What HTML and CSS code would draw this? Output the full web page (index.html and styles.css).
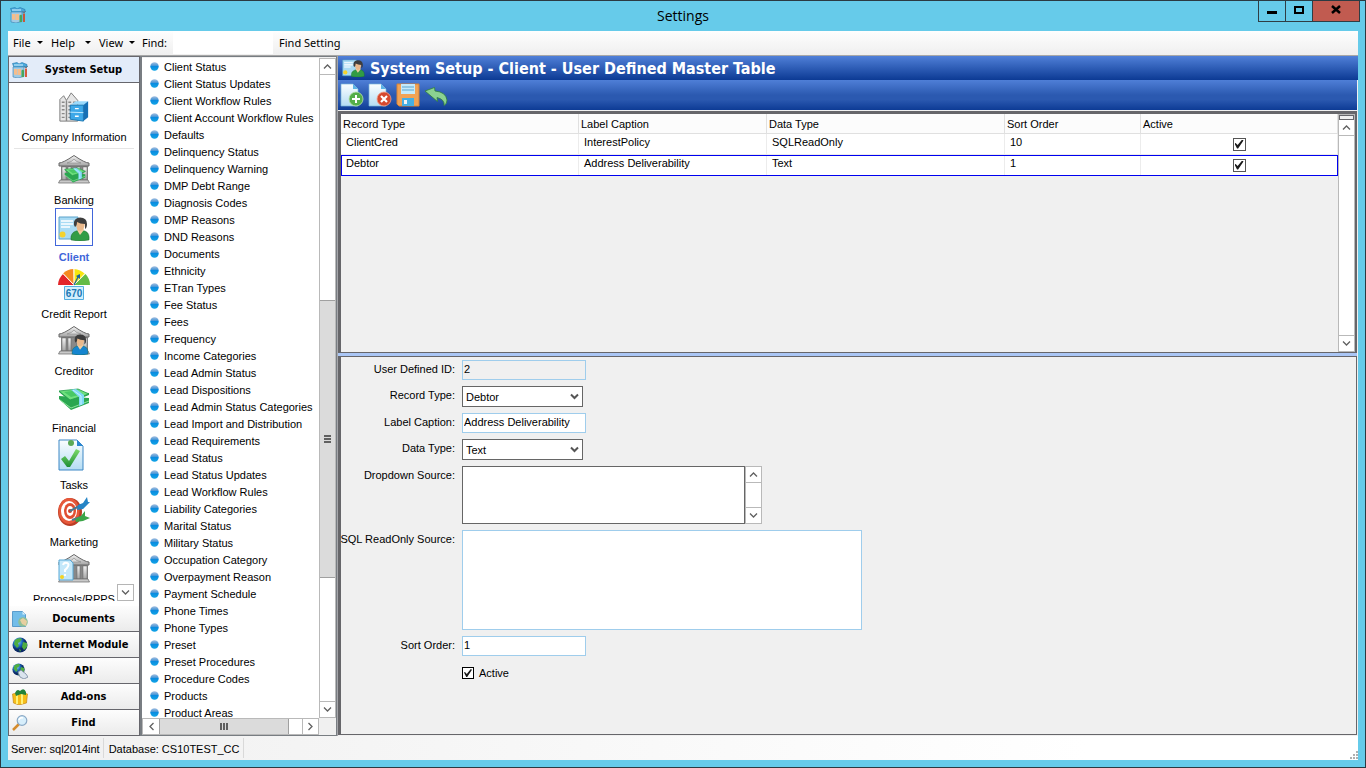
FILE: index.html
```html
<!DOCTYPE html>
<html lang="en">
<head>
    <meta charset="utf-8">
    <title>Settings</title>
    <link rel="stylesheet" href="styles.css">
</head>
<body>
    <!-- shared icons -->
    <svg class="sprites" aria-hidden="true">
        <defs>
            <linearGradient id="g-stone" x1="0" y1="0" x2="0" y2="1"><stop offset="0" stop-color="#f2f2f2"/><stop offset="1" stop-color="#a4a4a4"/></linearGradient>
            <linearGradient id="g-green" x1="0" y1="0" x2="0" y2="1"><stop offset="0" stop-color="#7ddc6a"/><stop offset="1" stop-color="#1f8e35"/></linearGradient>
            <linearGradient id="g-paper" x1="0" y1="0" x2="0" y2="1"><stop offset="0" stop-color="#fbfeff"/><stop offset="1" stop-color="#b4dcf3"/></linearGradient>
            <linearGradient id="g-bullet" x1="0" y1="0" x2="0" y2="1"><stop offset="0" stop-color="#a5bfe0"/><stop offset="0.4" stop-color="#4797d8"/><stop offset="0.5" stop-color="#0a8ce0"/><stop offset="1" stop-color="#12a5e6"/></linearGradient>
            <radialGradient id="g-globe" cx="0.35" cy="0.3"><stop offset="0" stop-color="#8fd4ff"/><stop offset="0.6" stop-color="#1d68bd"/><stop offset="1" stop-color="#0b2a66"/></radialGradient>
        </defs>
        <symbol id="i-bullet" viewBox="0 0 9 9"><circle cx="4.5" cy="4.5" r="4.2" fill="url(#g-bullet)"/></symbol>
        <symbol id="i-up" viewBox="0 0 9 9"><path d="M1 6.5 4.5 3 8 6.5" fill="none" stroke="#606060" stroke-width="1.3"/></symbol>
        <symbol id="i-down" viewBox="0 0 9 9"><path d="M1 2.5 4.5 6 8 2.5" fill="none" stroke="#606060" stroke-width="1.3"/></symbol>
        <symbol id="i-left" viewBox="0 0 9 9"><path d="M6.5 1 3 4.5 6.5 8" fill="none" stroke="#606060" stroke-width="1.3"/></symbol>
        <symbol id="i-right" viewBox="0 0 9 9"><path d="M2.5 1 6 4.5 2.5 8" fill="none" stroke="#606060" stroke-width="1.3"/></symbol>
        <symbol id="i-setup" viewBox="0 0 16 16">
            <path d="M.5 1.5 5 .5 7 2l3-1.5 5 2V5L2 5.5z" fill="#4aa9dc" stroke="#2376ad" stroke-width=".6"/>
            <path d="M1 5h11v9.5L6 16l-5-1z" fill="#9fcbe6" stroke="#3a80ae" stroke-width=".6"/>
            <path d="M2 7h3.5v6L2 12.5zM6 7h3v6H6z" fill="#f6bd8c"/>
            <path d="M2 3h9" stroke="#d9f2ff"/>
            <path d="M9.5 15V8.500l1.500-1 1 1V15z" fill="#47a75b"/>
            <path d="M14 6.500V15" stroke="#d54c28" stroke-width="1.800"/>
            <path d="m12.500 4 1.500 2 1.700-2" fill="none" stroke="#647786"/>
        </symbol>
        <symbol id="i-company" viewBox="0 0 32 34">
            <path d="M1 9 5 5l3 5 5-8 7 8v22H1z" fill="#e6e6e6" stroke="#777"/>
            <path d="M8 10v22M3 12h3m-3 4h3m-3 4h3m-3 4h3m-3 4h3m4-16h3m2 0h3m-8 4h3m-3 4h3m-3 4h3m-3 4h3" stroke="#888" stroke-width="1.500"/>
            <path d="m13 14 5-3h13l-4 4z" fill="#9adafc"/>
            <path d="M12 15h14v17l-14-2z" fill="#3da8e8" stroke="#1976b2"/>
            <path d="m26 15 5-4v17l-5 4z" fill="#1770b5"/>
            <path d="M12 22.500 26 23" stroke="#c6ecff"/>
            <path d="M17 18h4v1.500h-4zM17 26h4v1.500h-4z" fill="#fff"/>
        </symbol>
        <symbol id="i-bank" viewBox="0 0 32 32">
            <path d="M3 11h27v17H3z" fill="#888"/>
            <path d="M1 9q4 0 15-7.500Q27 9 31 9v3H1z" fill="url(#g-stone)" stroke="#686868"/>
            <path d="M9 9q5-1 7-4 2 3 7 4z" fill="#ddd" stroke="#888" stroke-width=".6"/>
            <path d="M4 13h4v13H4zM10 13h3v13h-3zM19 13h3v13h-3zM25 13h4v13h-4z" fill="url(#g-stone)" stroke="#666" stroke-width=".5"/>
            <path d="M2 26h28l1.500 3H.5z" fill="#c9c9c9" stroke="#666" stroke-width=".7"/>
        </symbol>
        <symbol id="i-cash" viewBox="0 0 32 24">
            <path d="m1 11 12 11 18-7v-5L1 8z" fill="#2aa650"/>
            <path d="m2 12 11 8 18-7" fill="none" stroke="#8be39a"/>
            <path d="m1 4 12 10 18-7V5L1 3z" fill="#2aa650"/>
            <path d="m1 3 19-2 11 5-19 6z" fill="#6fe07e" stroke="#22994a" stroke-width=".8"/>
            <path d="m6 4 12-1.500L25 6l-12 3z" fill="#48c865"/>
            <path d="m13 1.700 5-.6 8 6v9l-5 2V9z" fill="#7fd8f6"/>
            <path d="m15 2 8 6v9" fill="none" stroke="#c9f1ff"/>
        </symbol>
        <symbol id="i-person" viewBox="0 0 20 24">
            <path d="M1 23q-1-7 5-9l4-1 5 1q5 2 4 9-9 2-18 0z" fill="currentColor" stroke="#176029" stroke-width=".4"/>
            <path d="m7 13 3 5 4-5-1-3H8z" fill="#f3cda0"/>
            <path d="M6 5q0 9 4 9t5-8L12 3z" fill="#eab98c"/>
            <path d="M4 8Q3 1 10 .5q7 0 7 6.500 0 4-2 5V7Q10 7 7 5q0 4-2 5z" fill="#3d3d3d"/>
        </symbol>
        <symbol id="i-client" viewBox="0 0 32 26">
            <path d="M1 1h19v22H1z" fill="#a9dbf4" stroke="#5aa2ca"/>
            <path d="M3 5h12M3 8h12m-12 3h9" stroke="#fff" stroke-width="1.500"/>
            <circle cx="4.500" cy="18.500" r="3" fill="#f5d22e"/>
            <use href="#i-person" x="12" y="1" width="20" height="24" color="#319c45"/>
        </symbol>
        <symbol id="i-page" viewBox="0 0 24 24"><path d="M1 1h12l5 5v17H1z" fill="url(#g-paper)" stroke="#79b6d9" stroke-width=".7"/><path d="M13 1v5h5z" fill="#5eb4e6"/></symbol>
        <symbol id="i-globe" viewBox="0 0 16 16"><circle cx="8" cy="8" r="7.500" fill="url(#g-globe)"/><path d="M3 3q4-3 7-1L8 5 6 6l1 3-2 2-3-4zm8 2 4 1v4l-3 3-2-3zM7 12l2 1-1 2z" fill="#4fae3f"/></symbol>
    </svg>

    <div class="window">
        <header class="titlebar">
            <svg class="title-icon"><use href="#i-setup"/></svg>
            <h1>Settings</h1>
            <div class="window-buttons">
                <button type="button" aria-label="Minimize"><svg width="10" height="10"><path d="M0 6h10v3H0z"/></svg></button>
                <button type="button" aria-label="Maximize"><svg width="10" height="10"><path d="M1 2h8v6H1z" fill="none" stroke="#000" stroke-width="2"/></svg></button>
                <button type="button" class="close" aria-label="Close"><svg width="10" height="10"><path d="m1 1 8 7M9 1 1 8" stroke="#000" stroke-width="2.500"/></svg></button>
            </div>
        </header>

        <nav class="menubar">
            <button type="button" class="menu">File</button>
            <button type="button" class="menu menu-help">Help</button>
            <button type="button" class="menu menu-view">View</button>
            <label for="find">Find:</label>
            <input id="find" type="text">
            <button type="button" class="find-setting">Find Setting</button>
        </nav>

        <main class="content">
            <aside class="sidebar">
                <button type="button" class="section current"><svg><use href="#i-setup"/></svg><span>System Setup</span></button>
                <div class="modules">
                    <button type="button" class="module"><span class="module-icon"><svg viewBox="0 0 32 34"><use href="#i-company"/></svg></span>Company Information</button>
                    <hr>
                    <button type="button" class="module"><span class="module-icon"><svg viewBox="0 0 32 32"><use href="#i-bank"/><use href="#i-cash" x="6" y="13" width="22" height="17"/></svg></span>Banking</button>
                    <button type="button" class="module selected"><span class="module-icon"><svg viewBox="0 0 32 32"><use href="#i-client" y="5" width="32" height="26"/></svg></span>Client</button>
                    <button type="button" class="module"><span class="module-icon"><svg viewBox="0 0 32 32">
                        <path d="M16 17H0A16 16 0 0 1 5 6z" fill="#e3262a"/>
                        <path d="M16 17 5 5.500A16 16 0 0 1 15.500 1z" fill="#f58a20"/>
                        <path d="M16 17V1a16 16 0 0 1 11 5z" fill="#f7e60e"/>
                        <path d="M16 17 27.500 6A16 16 0 0 1 32 17z" fill="#63bb46"/>
                        <path d="m5 5.500 11 11.500L27 5.500M16 17V1" stroke="#fff" fill="none"/>
                        <path d="m16 17 5-10" stroke="#17649c" stroke-width="1.300"/><path d="m18 8 4-2v5z" fill="#17649c"/>
                        <path d="M6.500 18.500h19v13h-19z" fill="#d3effc" stroke="#53aee0"/>
                        <text x="16" y="29" class="score">670</text>
                    </svg></span>Credit Report</button>
                    <button type="button" class="module"><span class="module-icon"><svg viewBox="0 0 32 32"><use href="#i-bank"/><use href="#i-person" x="13" y="9" width="18" height="21" color="#1685cf"/></svg></span>Creditor</button>
                    <button type="button" class="module"><span class="module-icon"><svg viewBox="0 0 32 32"><use href="#i-cash" y="6" width="32" height="24"/></svg></span>Financial</button>
                    <button type="button" class="module"><span class="module-icon"><svg viewBox="0 0 32 32">
                        <path d="M1 1h18l6 6v24H1z" fill="url(#g-paper)" stroke="#3c87c5"/><path d="M19 1v6h6z" fill="#2c88d2"/>
                        <circle cx="13" cy="4" r="3" fill="#5ba956"/>
                        <path d="m3 20 4-3 4 5 7-12 4 2-10 16H9z" fill="url(#g-green)"/>
                    </svg></span>Tasks</button>
                    <button type="button" class="module"><span class="module-icon"><svg viewBox="0 0 32 32">
                        <ellipse cx="12" cy="16" rx="12" ry="14" fill="#bb3d25"/><ellipse cx="11" cy="15" rx="10.500" ry="13" fill="#e6583a"/>
                        <ellipse cx="11" cy="15" rx="8" ry="10" fill="#fff"/><ellipse cx="12" cy="15" rx="6" ry="8" fill="#e04e32"/>
                        <ellipse cx="12" cy="15" rx="3.500" ry="5" fill="#fff"/><circle cx="12" cy="15" r="2" fill="#d43c24"/>
                        <path d="m12 15 11-6M14 24l12-4" stroke="#4b7890" stroke-width="2"/>
                        <path d="m20 9 5-2 4-6 1 5h2l-7 7-6 1z" fill="#2584c5"/>
                        <path d="m17 23 6-3 4-5v5l5 2-7 3-7 1z" fill="#3ca548"/>
                    </svg></span>Marketing</button>
                    <button type="button" class="module"><span class="module-icon"><svg viewBox="0 0 32 32"><use href="#i-bank"/>
                        <path d="M1 7h11l3 3v17H1z" fill="#c4e8fa" stroke="#58a8d5"/><path d="M5 12q1-3 4-2t0 5l-2 2v2m0 2v2" fill="none" stroke="#fff" stroke-width="2"/>
                        <circle cx="4" cy="24" r="2" fill="#f4d321"/>
                    </svg></span>Proposals/RPPS</button>
                    <button type="button" class="more" aria-label="Scroll down"><svg><use href="#i-down"/></svg></button>
                </div>
                <button type="button" class="section"><svg viewBox="0 0 16 16"><path d="M.5.500h10l3 3v12H.5z" fill="#72bde9" stroke="#3283bd" stroke-width=".7"/><path d="M10.500.500v3h3z" fill="#d6effc"/><circle cx="11" cy="11" r="4.800" fill="#8dbf99"/><path d="m8 9 3-2 4 3-1 5-4-2z" fill="#e7cfa0"/></svg><span>Documents</span></button>
                <button type="button" class="section"><svg><use href="#i-globe"/></svg><span>Internet Module</span></button>
                <button type="button" class="section"><svg viewBox="0 0 16 16"><use href="#i-globe" width="13" height="13"/><path d="m6 9 3-2 5 4 2 3-4 2-4-2z" fill="#dbe4ee" stroke="#74869e" stroke-width=".8"/></svg><span>API</span></button>
                <button type="button" class="section"><svg viewBox="0 0 16 16"><path d="M.5 5 9 3l6.500 2-1 9L7 16l-5.500-2z" fill="#f5bd19" stroke="#bd7c0b" stroke-width=".6"/><path d="M5 5v10m5-10v10" stroke="#fff178" stroke-width="2"/><path d="M3 4q2-5 5-2 4-4 6 1v3L9 5 4 7z" fill="#23833a"/></svg><span>Add-ons</span></button>
                <button type="button" class="section"><svg viewBox="0 0 16 16"><path d="m1 15 6-6" stroke="#d58c2d" stroke-width="2.500"/><circle cx="10" cy="5.500" r="4.800" fill="#d7eefb" stroke="#8aa9c6" stroke-width="1.200"/><path d="M7 5q1-3 4-2" fill="none" stroke="#fff" stroke-width="1.500"/></svg><span>Find</span></button>
            </aside>

            <section class="tables">
                <ul class="table-list">
                    <li><a href="#"><svg><use href="#i-bullet"/></svg>Client Status</a></li>
                    <li><a href="#"><svg><use href="#i-bullet"/></svg>Client Status Updates</a></li>
                    <li><a href="#"><svg><use href="#i-bullet"/></svg>Client Workflow Rules</a></li>
                    <li><a href="#"><svg><use href="#i-bullet"/></svg>Client Account Workflow Rules</a></li>
                    <li><a href="#"><svg><use href="#i-bullet"/></svg>Defaults</a></li>
                    <li><a href="#"><svg><use href="#i-bullet"/></svg>Delinquency Status</a></li>
                    <li><a href="#"><svg><use href="#i-bullet"/></svg>Delinquency Warning</a></li>
                    <li><a href="#"><svg><use href="#i-bullet"/></svg>DMP Debt Range</a></li>
                    <li><a href="#"><svg><use href="#i-bullet"/></svg>Diagnosis Codes</a></li>
                    <li><a href="#"><svg><use href="#i-bullet"/></svg>DMP Reasons</a></li>
                    <li><a href="#"><svg><use href="#i-bullet"/></svg>DND Reasons</a></li>
                    <li><a href="#"><svg><use href="#i-bullet"/></svg>Documents</a></li>
                    <li><a href="#"><svg><use href="#i-bullet"/></svg>Ethnicity</a></li>
                    <li><a href="#"><svg><use href="#i-bullet"/></svg>ETran Types</a></li>
                    <li><a href="#"><svg><use href="#i-bullet"/></svg>Fee Status</a></li>
                    <li><a href="#"><svg><use href="#i-bullet"/></svg>Fees</a></li>
                    <li><a href="#"><svg><use href="#i-bullet"/></svg>Frequency</a></li>
                    <li><a href="#"><svg><use href="#i-bullet"/></svg>Income Categories</a></li>
                    <li><a href="#"><svg><use href="#i-bullet"/></svg>Lead Admin Status</a></li>
                    <li><a href="#"><svg><use href="#i-bullet"/></svg>Lead Dispositions</a></li>
                    <li><a href="#"><svg><use href="#i-bullet"/></svg>Lead Admin Status Categories</a></li>
                    <li><a href="#"><svg><use href="#i-bullet"/></svg>Lead Import and Distribution</a></li>
                    <li><a href="#"><svg><use href="#i-bullet"/></svg>Lead Requirements</a></li>
                    <li><a href="#"><svg><use href="#i-bullet"/></svg>Lead Status</a></li>
                    <li><a href="#"><svg><use href="#i-bullet"/></svg>Lead Status Updates</a></li>
                    <li><a href="#"><svg><use href="#i-bullet"/></svg>Lead Workflow Rules</a></li>
                    <li><a href="#"><svg><use href="#i-bullet"/></svg>Liability Categories</a></li>
                    <li><a href="#"><svg><use href="#i-bullet"/></svg>Marital Status</a></li>
                    <li><a href="#"><svg><use href="#i-bullet"/></svg>Military Status</a></li>
                    <li><a href="#"><svg><use href="#i-bullet"/></svg>Occupation Category</a></li>
                    <li><a href="#"><svg><use href="#i-bullet"/></svg>Overpayment Reason</a></li>
                    <li><a href="#"><svg><use href="#i-bullet"/></svg>Payment Schedule</a></li>
                    <li><a href="#"><svg><use href="#i-bullet"/></svg>Phone Times</a></li>
                    <li><a href="#"><svg><use href="#i-bullet"/></svg>Phone Types</a></li>
                    <li><a href="#"><svg><use href="#i-bullet"/></svg>Preset</a></li>
                    <li><a href="#"><svg><use href="#i-bullet"/></svg>Preset Procedures</a></li>
                    <li><a href="#"><svg><use href="#i-bullet"/></svg>Procedure Codes</a></li>
                    <li><a href="#"><svg><use href="#i-bullet"/></svg>Products</a></li>
                    <li><a href="#"><svg><use href="#i-bullet"/></svg>Product Areas</a></li>
                </ul>
                <div class="scroll-v">
                    <button type="button" aria-label="Up"><svg><use href="#i-up"/></svg></button>
                    <div class="track-before"></div>
                    <div class="thumb"><svg width="7" height="8"><path d="M0 1h7M0 4h7M0 7h7" stroke="#606060" stroke-width="2"/></svg></div>
                    <div class="track-after"></div>
                    <button type="button" aria-label="Down"><svg><use href="#i-down"/></svg></button>
                </div>
                <div class="scroll-h">
                    <button type="button" aria-label="Left"><svg><use href="#i-left"/></svg></button>
                    <div class="thumb"><svg width="8" height="7"><path d="M1 0v7M4 0v7M7 0v7" stroke="#606060" stroke-width="2"/></svg></div>
                    <div class="track-after"></div>
                    <button type="button" aria-label="Right"><svg><use href="#i-right"/></svg></button>
                </div>
            </section>

            <section class="workspace">
                <h2 class="page-title"><svg viewBox="0 0 32 26"><use href="#i-client"/></svg>System Setup - Client - User Defined Master Table</h2>
                <div class="toolbar">
                    <button type="button" aria-label="New"><svg viewBox="0 0 24 24"><use href="#i-page"/><circle cx="16" cy="16" r="7" fill="#54ae49" stroke="#b9e1ac" stroke-width=".8"/><path d="M16 12v8m-4-4h8" stroke="#fff" stroke-width="2"/></svg></button>
                    <button type="button" aria-label="Delete"><svg viewBox="0 0 24 24"><use href="#i-page"/><circle cx="16" cy="16" r="7" fill="#d6492f" stroke="#f0a08b" stroke-width=".8"/><path d="m13 13 6 6m0-6-6 6" stroke="#fff" stroke-width="2.200"/></svg></button>
                    <button type="button" aria-label="Save"><svg viewBox="0 0 24 24"><path d="M1 1h22v22H3l-2-2z" fill="#f2a355" stroke="#d68336"/><path d="M5 1h14v10H5z" fill="#c6eafa"/><path d="M6 4h12M6 7h12" stroke="#5ba5d0"/><path d="M6 15h12v8H6z" fill="#45aee4"/><path d="M8 17h3v4H8z" fill="#f4f4f4"/></svg></button>
                    <button type="button" aria-label="Undo"><svg viewBox="0 0 24 24"><path d="m1 8 9.500-3.500.500 3.500q11 1 12 9 0 4-3 5.500 1-6-7-8l.5 4z" fill="#8bd291" stroke="#30803b" stroke-width=".8"/></svg></button>
                </div>
                <div class="grid">
                    <table>
                        <colgroup><col class="c-type"><col class="c-caption"><col class="c-data"><col class="c-sort"><col></colgroup>
                        <thead>
                            <tr><th>Record Type</th><th>Label Caption</th><th>Data Type</th><th>Sort Order</th><th>Active</th></tr>
                        </thead>
                        <tbody>
                            <tr><td>ClientCred</td><td>InterestPolicy</td><td>SQLReadOnly</td><td>10</td><td class="check"><input type="checkbox" aria-label="ClientCred active" checked></td></tr>
                            <tr class="selected"><td>Debtor</td><td>Address Deliverability</td><td>Text</td><td>1</td><td class="check"><input type="checkbox" aria-label="Debtor active" checked></td></tr>
                        </tbody>
                    </table>
                    <div class="scroll-v">
                        <div class="split-handle"></div>
                        <button type="button" aria-label="Up"><svg><use href="#i-up"/></svg></button>
                        <div class="track-before"></div>
                        <button type="button" aria-label="Down"><svg><use href="#i-down"/></svg></button>
                    </div>
                </div>
                <div class="splitter"></div>
                <form class="details">
                    <label for="user-id">User Defined ID:</label>
                    <input id="user-id" type="text" value="2" readonly>
                    <label for="record-type">Record Type:</label>
                    <div class="select"><select id="record-type"><option>Debtor</option><option>ClientCred</option></select><svg viewBox="0 0 9 9"><path d="M1 2.500 4.500 6 8 2.500" fill="none" stroke="#555" stroke-width="2"/></svg></div>
                    <label for="caption">Label Caption:</label>
                    <input id="caption" type="text" value="Address Deliverability">
                    <label for="data-type">Data Type:</label>
                    <div class="select"><select id="data-type"><option>Text</option><option>SQLReadOnly</option></select><svg viewBox="0 0 9 9"><path d="M1 2.500 4.500 6 8 2.500" fill="none" stroke="#555" stroke-width="2"/></svg></div>
                    <label for="dropdown-source">Dropdown Source:</label>
                    <div class="source">
                        <textarea id="dropdown-source"></textarea>
                        <div class="scroll-v">
                            <button type="button" aria-label="Up"><svg><use href="#i-up"/></svg></button>
                            <div class="track-before"></div>
                            <button type="button" aria-label="Down"><svg><use href="#i-down"/></svg></button>
                        </div>
                    </div>
                    <label for="sql-source">SQL ReadOnly Source:</label>
                    <textarea id="sql-source" class="sql"></textarea>
                    <label for="sort-order">Sort Order:</label>
                    <input id="sort-order" type="text" value="1">
                    <label class="active"><input type="checkbox" checked>Active</label>
                </form>
            </section>
        </main>

        <footer class="statusbar">
            <span>Server: sql2014int</span>
            <span>Database: CS10TEST_CC</span>
            <svg class="grip" width="9" height="9"><path d="M7 1h2M4 4h2M7 4h2M1 7h2M4 7h2M7 7h2" stroke="#b0b0b0" stroke-width="2"/></svg>
        </footer>
    </div>
</body>
</html>
```

FILE: styles.css
```css
* {
    box-sizing: border-box;
}
body {
    margin: 0;
    font-family: "Liberation Sans", Arial, sans-serif;
    font-size: 11px;
    color: #000;
}
button, input, select, textarea {
    font: inherit;
    color: inherit;
    margin: 0;
    padding: 0;
    border: 0;
    border-radius: 0;
    background: none;
}
.sprites {
    position: absolute;
    width: 0;
    height: 0;
}
.window {
    display: flex;
    flex-direction: column;
    height: 100vh;
    padding: 0 7px 7px;
    border: 1px solid #2b3a42;
    background: #66cbea;
}

/* title bar */
.titlebar {
    display: grid;
    grid-template-columns: 1fr auto 1fr;
    height: 30px;
    flex: none;
}
.title-icon {
    width: 16px;
    height: 16px;
    margin: 6px 2px;
}
.titlebar h1 {
    margin: 0;
    font: 14px/30px "Open Sans", "Segoe UI", sans-serif;
}
.window-buttons {
    display: flex;
    justify-self: end;
    height: 21px;
    margin-right: -2px;
    border: 1px solid #2f3d44;
    border-top: 0;
}
.window-buttons button {
    width: 27px;
    border-right: 1px solid #2f3d44;
}
.window-buttons .close {
    width: 46px;
    border-right: 0;
    background: #c15b50;
}

/* menu */
.menubar {
    display: flex;
    align-items: center;
    height: 25px;
    flex: none;
    padding: 0 5px 1px;
    font-family: "Noto Sans", "Segoe UI", sans-serif;
    background: linear-gradient(#fefefe, #efefef);
    border-bottom: 1px solid #a7a7a7;
}
.menu {
    display: flex;
    align-items: center;
    justify-content: space-between;
    width: 30px;
    margin-right: 8px;
}
.menu-help {
    width: 40px;
}
.menu-view {
    width: 36px;
    margin-right: 7px;
}
.menu::after {
    content: "";
    border: 3px solid transparent;
    border-top-color: #000;
    border-bottom: 0;
}
.menubar input {
    width: 100px;
    height: 23px;
    margin: 0 6px;
    background: #fff;
}

/* main area */
.content {
    display: flex;
    flex: 1;
    min-height: 0;
    background: #f0f0f0;
}
.sidebar {
    display: flex;
    flex-direction: column;
    width: 132px;
    flex: none;
    border: 1px solid #66666c;
    background: #fff;
}
.section {
    display: flex;
    align-items: center;
    height: 26px;
    flex: none;
    padding: 0 3px;
    font-family: "DejaVu Sans Condensed", "DejaVu Sans", Tahoma, sans-serif;
    font-size: 11px;
    font-weight: bold;
    background: linear-gradient(#fdfdfd, #ebebeb);
    border-bottom: 1px solid #66666c;
}
.section:last-child {
    height: 25px;
    border-bottom: 0;
}
.section svg {
    width: 16px;
    height: 16px;
    flex: none;
}
.section span {
    flex: 1;
    padding-left: 3px;
    white-space: nowrap;
}
.section.current {
    background: #e3ecf9;
}
.modules {
    position: relative;
    display: flex;
    flex-direction: column;
    flex: 1;
    min-height: 0;
    overflow: hidden;
    margin-bottom: 5px;
    padding-top: 5px;
}
.module {
    display: flex;
    flex-direction: column;
    align-items: center;
    height: 57px;
    flex: none;
    line-height: 23px;
}
.module-icon {
    display: flex;
    align-items: center;
    justify-content: center;
    width: 38px;
    height: 38px;
    flex: none;
}
.module-icon svg {
    width: 32px;
    height: 32px;
}
.module.selected {
    font-weight: bold;
    color: #4166da;
}
.module.selected .module-icon {
    border: 1px solid #4166da;
}
.modules hr {
    width: 120px;
    height: 1px;
    flex: none;
    margin: 3px auto 2px;
    border: 0;
    background: #e5e5e5;
}
.more {
    position: absolute;
    right: 5px;
    bottom: 0;
    width: 17px;
    height: 17px;
    background: #fff;
    border: 1px solid #b5b5b5;
}
.score {
    font: bold 10px "Liberation Sans", Arial, sans-serif;
    text-anchor: middle;
    fill: #2078b5;
}

/* scroll bars */
.scroll-v, .scroll-h {
    display: flex;
    background: #fff;
    border: 1px solid #b9b9b9;
}
.scroll-v {
    flex-direction: column;
    width: 17px;
    flex: none;
}
.scroll-v button {
    height: 16px;
    border-bottom: 1px solid #b9b9b9;
}
.scroll-v button:last-child {
    border-top: 1px solid #b9b9b9;
    border-bottom: 0;
}
.scroll-h button {
    width: 16px;
}
.scroll-h button:last-child {
    border-left: 1px solid #b9b9b9;
}
.scroll-v button svg, .scroll-h button svg, .more svg {
    display: block;
    width: 9px;
    height: 9px;
    margin: auto;
}
.thumb {
    display: flex;
    align-items: center;
    justify-content: center;
    background: #dbdbdb;
    border: 1px solid #a0a0a0;
}
.track-before {
    flex: 1;
}

/* list of setup tables */
.tables {
    display: grid;
    grid-template: minmax(0, 1fr) 17px / 1fr 17px;
    width: 197px;
    flex: none;
    padding-top: 1px;
    background: #f0f0f0;
    border: 1px solid #787d82;
    border-left-width: 2px;
}
.table-list {
    margin: 0;
    padding: 0;
    list-style: none;
    overflow: hidden;
    background: #fff;
}
.table-list a {
    display: flex;
    align-items: center;
    gap: 5px;
    height: 17px;
    padding-left: 8px;
    color: #000;
    text-decoration: none;
    white-space: nowrap;
}
.table-list svg {
    width: 9px;
    height: 9px;
    flex: none;
}
.tables .scroll-v .track-before {
    flex: 226;
}
.tables .scroll-v .thumb {
    flex: 277;
    border-width: 1px 0;
}
.tables .scroll-v .track-after {
    flex: 124;
}
.tables .scroll-h .thumb {
    flex: 130;
    border-width: 0 1px;
}
.tables .scroll-h .track-after {
    flex: 13;
}

/* right side */
.workspace {
    display: flex;
    flex-direction: column;
    flex: 1;
    min-width: 0;
    padding: 0 1px 1px 0;
    border-left: 1px solid #a6a6aa;
}
.page-title {
    display: flex;
    align-items: center;
    gap: 5px;
    height: 24px;
    flex: none;
    margin: 0 -1px 0 0;
    padding: 1px 4px 0;
    font: bold 16px "DejaVu Sans Condensed", "DejaVu Sans", Tahoma, sans-serif;
    color: #fff;
    background: linear-gradient(#5080d8, #0c3a94);
}
.page-title svg {
    width: 23px;
    height: 19px;
}
.toolbar {
    display: flex;
    gap: 4px;
    height: 30px;
    flex: none;
    padding: 3px 2px;
    background: linear-gradient(#4f7fd7, #2b59b0 50%, #2b59b0 65%, #0d3b95);
}
.toolbar button, .toolbar svg {
    display: block;
    width: 24px;
    height: 24px;
}
.grid {
    display: flex;
    height: 242px;
    flex: none;
    margin-top: 1px;
    border: 3px solid #66666a;
    border-right-width: 2px;
    border-bottom-width: 1px;
}
.grid table {
    flex: 1;
    align-self: flex-start;
    table-layout: fixed;
    border-collapse: separate;
    border-spacing: 0;
    background: #fff;
}
.c-type {
    width: 238px;
}
.c-caption {
    width: 188px;
}
.c-data {
    width: 238px;
}
.c-sort {
    width: 136px;
}
.grid th {
    height: 20px;
    padding: 0 2px;
    font-weight: normal;
    text-align: left;
    background: #fcfcfc;
    border: solid #e0e0e0;
    border-width: 0 1px 1px 0;
}
.grid td {
    height: 21px;
    padding: 0 5px 5px;
    line-height: 14px;
    border: solid #ececec;
    border-width: 0 1px 1px 0;
}
.grid tr.selected {
    outline: 1px solid #0000f0;
    outline-offset: -1px;
}
.grid td.check {
    padding: 0;
}
input[type="checkbox"] {
    appearance: none;
    display: block;
    width: 13px;
    height: 13px;
    flex: none;
    background: #fff;
    border: 1px solid #555;
}
.check input[type="checkbox"] {
    margin: 0 auto;
}
input[type="checkbox"]:checked::before {
    content: "";
    display: block;
    height: 9px;
    margin: 1px;
    background: #1b1b1b;
    clip-path: polygon(0 45%, 12% 38%, 35% 62%, 85% 0, 100% 10%, 40% 100%, 28% 100%);
}
.split-handle {
    height: 5px;
    flex: none;
    background: #f0f0f0;
    border: 1px solid #66666a;
}
.splitter {
    height: 3px;
    flex: none;
    background: #aac6f5;
}

/* record form */
.details {
    display: grid;
    grid-template-columns: 114px 1fr;
    gap: 6px 7px;
    align-content: start;
    justify-items: start;
    flex: 1;
    padding: 3px 0;
    border: 1px solid #66666a;
    border-left-width: 3px;
}
.details > label {
    justify-self: end;
    line-height: 18px;
    white-space: nowrap;
}
.details input[type="text"] {
    width: 124px;
    height: 20px;
    padding: 0 1px 2px;
    background: #fff;
    border: 1px solid #9fcdec;
}
.details input[readonly] {
    background: #f0f0f0;
}
.select {
    position: relative;
    width: 121px;
    height: 21px;
}
.select select {
    appearance: none;
    display: block;
    width: 100%;
    height: 100%;
    padding: 0 3px;
    background: #fff;
    border: 1px solid #666;
}
.select svg {
    position: absolute;
    right: 4px;
    top: 6px;
    width: 9px;
    height: 9px;
    pointer-events: none;
}
.source {
    display: flex;
    width: 300px;
    height: 58px;
}
textarea {
    display: block;
    resize: none;
}
.source textarea {
    flex: 1;
    background: #fff;
    border: 1px solid #666;
}
.details .sql {
    width: 400px;
    height: 100px;
    background: #fff;
    border: 1px solid #9fcdec;
}
.details > .active {
    grid-column: 2;
    justify-self: start;
    display: flex;
    align-items: center;
    gap: 5px;
    height: 22px;
}
.active input[type="checkbox"] {
    width: 12px;
    height: 12px;
    border-color: #000;
}
.active input[type="checkbox"]:checked::before {
    height: 8px;
}

/* status bar */
.statusbar {
    display: flex;
    align-items: center;
    height: 24px;
    flex: none;
    padding-left: 1px;
    background: linear-gradient(90deg, #f0f0f0, #fff 80%);
}
.statusbar span {
    padding: 5px 3px 3px 2px;
    border-right: 1px solid #d9d9d9;
    margin-right: 3px;
}
.grip {
    align-self: flex-end;
    margin-left: auto;
}
```
